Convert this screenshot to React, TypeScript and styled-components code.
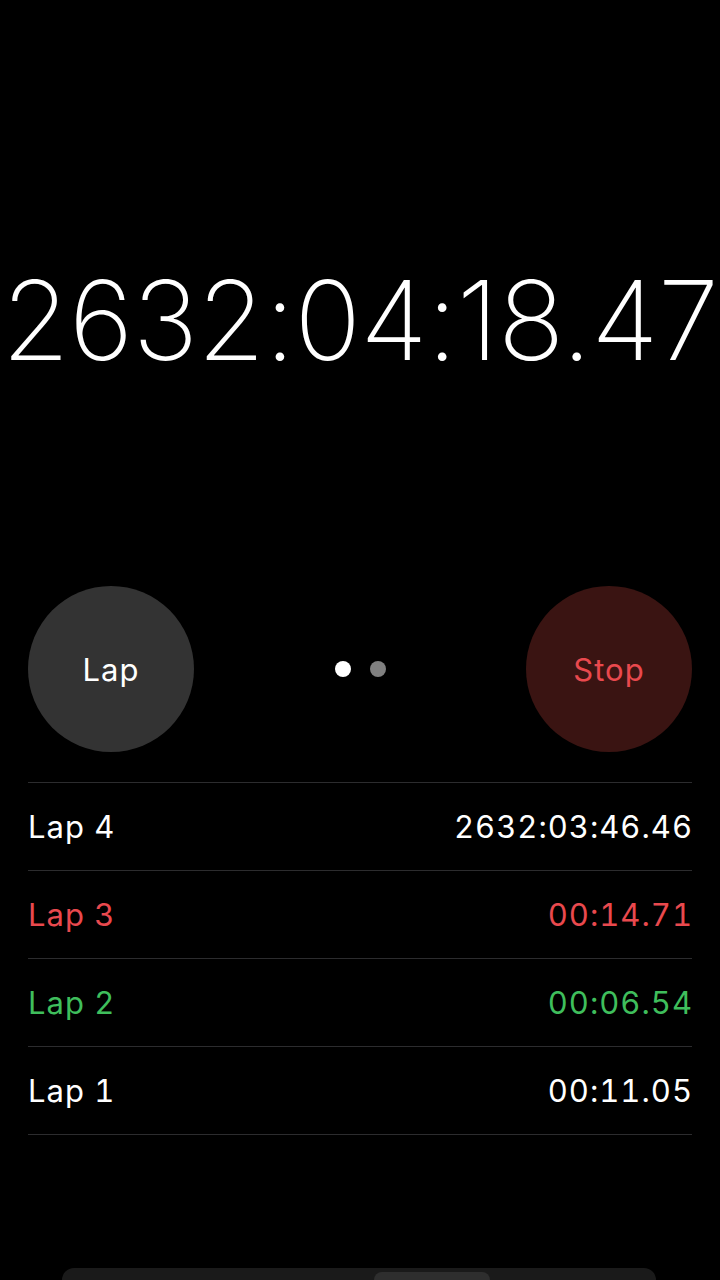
import styled, { createGlobalStyle } from 'styled-components'

type Tone = 'plain' | 'worst' | 'best'

const laps: { name: string; time: string; tone: Tone }[] = [
  { name: 'Lap 4', time: '2632:03:46.46', tone: 'plain' },
  { name: 'Lap 3', time: '00:14.71', tone: 'worst' },
  { name: 'Lap 2', time: '00:06.54', tone: 'best' },
  { name: 'Lap 1', time: '00:11.05', tone: 'plain' }
]

const toneColor: Record<Tone, string> = {
  plain: '#ffffff',
  worst: '#e9494e',
  best: '#3fbe5c'
}

const GlobalStyle = createGlobalStyle`
  * {
    box-sizing: border-box;
    margin: 0;
    padding: 0;
  }

  body {
    background-color: #000;
    color: #fff;
    font-family: Inter, 'Noto Sans', sans-serif;
  }
`

const Page = styled.main`
  display: flex;
  flex-direction: column;
  height: 1280px;
  overflow: hidden;
  padding: 0 28px;
`

const Display = styled.div`
  display: flex;
  font-size: 110px;
  font-weight: 200;
  justify-content: center;
  letter-spacing: -0.6px;
  line-height: 116px;
  margin: 0 -28px;
  padding-top: 262px;
  white-space: nowrap;
`

const Controls = styled.div`
  align-items: center;
  display: grid;
  grid-template-columns: 166px 1fr 166px;
  margin-top: 208px;
`

const Round = styled.button<{ $variant: 'lap' | 'stop' }>`
  align-items: center;
  background-color: ${({ $variant }) => ($variant === 'stop' ? '#3a1412' : '#333333')};
  border: 0;
  border-radius: 50%;
  color: ${({ $variant }) => ($variant === 'stop' ? '#e9494e' : '#ffffff')};
  display: flex;
  font-family: Inter, 'Noto Sans', sans-serif;
  font-size: 31px;
  height: 166px;
  justify-content: center;
  letter-spacing: 1px;
  width: 166px;
`

const Dots = styled.div`
  display: flex;
  gap: 19px;
  justify-content: center;
`

const Dot = styled.span<{ $active?: boolean }>`
  background-color: ${({ $active }) => ($active ? '#ffffff' : '#808080')};
  border-radius: 50%;
  height: 16px;
  width: 16px;
`

const LapList = styled.ul`
  border-top: 1px solid #2c2c2e;
  list-style: none;
  margin-top: 30px;
`

const LapRow = styled.li<{ $tone: Tone }>`
  align-items: center;
  border-bottom: 1px solid #2c2c2e;
  color: ${({ $tone }) => toneColor[$tone]};
  display: flex;
  font-size: 31px;
  font-variant-numeric: tabular-nums;
  height: 88px;
  justify-content: space-between;
  letter-spacing: 1px;

  span:last-child {
    margin-right: -1px;
  }
`

const TabBar = styled.div`
  background-color: #1a1a1a;
  border-radius: 34px 34px 0 0;
  display: flex;
  height: 12px;
  margin: auto 36px 0 34px;
  padding: 4px 0 0 312px;
`

const TabHighlight = styled.span`
  background-color: #2e2e2e;
  border-radius: 20px 20px 0 0;
  height: 8px;
  width: 116px;
`

export default function App() {
  return (
    <>
      <GlobalStyle />
      <Page>
        <Display>2632:04:18.47</Display>
        <Controls>
          <Round type="button" $variant="lap">
            Lap
          </Round>
          <Dots>
            <Dot $active />
            <Dot />
          </Dots>
          <Round type="button" $variant="stop">
            Stop
          </Round>
        </Controls>
        <LapList>
          {laps.map((lap) => (
            <LapRow key={lap.name} $tone={lap.tone}>
              <span>{lap.name}</span>
              <span>{lap.time}</span>
            </LapRow>
          ))}
        </LapList>
        <TabBar>
          <TabHighlight />
        </TabBar>
      </Page>
    </>
  )
}
